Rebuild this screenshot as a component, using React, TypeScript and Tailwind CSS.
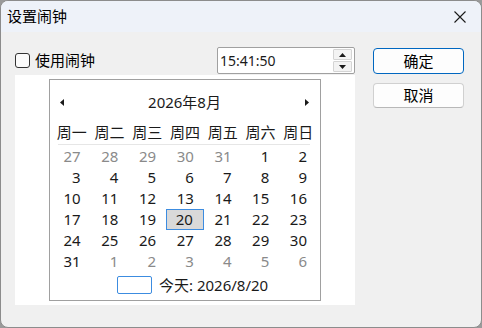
const font = { fontFamily: '"Noto Sans", "Noto Sans CJK SC", sans-serif' }

const weekdays = ['周一', '周二', '周三', '周四', '周五', '周六', '周日']

const days: { d: number; muted?: boolean }[] = [
  { d: 27, muted: true },
  { d: 28, muted: true },
  { d: 29, muted: true },
  { d: 30, muted: true },
  { d: 31, muted: true },
  ...Array.from({ length: 31 }, (_, i) => ({ d: i + 1 })),
  ...[1, 2, 3, 4, 5, 6].map((d) => ({ d, muted: true })),
]

function Calendar() {
  return (
    <div className="flex flex-col w-[272px] h-[222px] border border-[#a0a0a0] bg-white">
      <div className="flex items-center justify-between h-[24px] mt-[10px] pl-[10px] pr-[11px]">
        <svg width="4" height="7" viewBox="0 0 4 7">
          <path d="M4 0 L0 3.5 L4 7 Z" fill="#1a1a1a" />
        </svg>
        <span className="text-[15px] text-[#1a1a1a]">2026年8月</span>
        <svg width="4" height="7" viewBox="0 0 4 7">
          <path d="M0 0 L4 3.5 L0 7 Z" fill="#1a1a1a" />
        </svg>
      </div>
      <div className="px-[3px]">
        <div className="grid grid-cols-7 h-[20px] mt-[8px] items-center">
          {weekdays.map((w) => (
            <span key={w} className="text-center text-[15px] leading-none text-[#1a1a1a]">
              {w}
            </span>
          ))}
        </div>
        <div className="h-px bg-[#e6e6e6] ml-[5px] mr-[7px] mt-[2px]" />
        <div className="grid grid-cols-7 mt-[1px]">
          {days.map((c, i) => {
            const sel = !c.muted && c.d === 20
            return (
              <span
                key={i}
                className={
                  'h-[21px] flex items-center justify-end pr-[10px] text-[15px] leading-none ' +
                  (c.muted ? 'text-[#8a8a8a] ' : 'text-[#1a1a1a] ') +
                  (sel ? 'bg-[#d9d9d9] border border-[#3c8ce0] pr-[9px]' : '')
                }
              >
                {c.d}
              </span>
            )
          })}
        </div>
      </div>
      <div className="flex items-center gap-[7px] mt-[4px] ml-[67px] h-[18px]">
        <div className="w-[35px] h-[18px] border border-[#3c8ce0] rounded-[2px]" />
        <span className="text-[15px] leading-none text-[#1a1a1a]">今天: 2026/8/20</span>
      </div>
    </div>
  )
}

function Spin() {
  return (
    <div className="flex flex-col gap-px w-[19px]">
      <div className="h-[11px] flex items-center justify-center bg-[#f3f3f3] border border-[#d4d4d4] rounded-[1px]">
        <svg width="7" height="4" viewBox="0 0 7 4">
          <path d="M0 4 L3.5 0 L7 4 Z" fill="#1a1a1a" />
        </svg>
      </div>
      <div className="h-[11px] flex items-center justify-center bg-[#f3f3f3] border border-[#d4d4d4] rounded-[1px]">
        <svg width="7" height="4" viewBox="0 0 7 4">
          <path d="M0 0 L3.5 4 L7 0 Z" fill="#1a1a1a" />
        </svg>
      </div>
    </div>
  )
}

export default function App() {
  return (
    <div className="w-[482px] h-[328px] bg-[#9a9a9a]" style={font}>
      <div className="w-full h-full flex flex-col rounded-[8px] overflow-hidden border border-[#8c8c8c] bg-[#f0f0f0]">
        <div className="h-[31px] flex items-center justify-between bg-[#eef2f9] pl-[6px] pr-[15px]">
          <span className="text-[15px] text-black">设置闹钟</span>
          <svg width="12" height="12" viewBox="0 0 12 12">
            <path d="M0.5 0.5 L11.5 11.5 M11.5 0.5 L0.5 11.5" stroke="#1a1a1a" strokeWidth="1.1" />
          </svg>
        </div>
        <div className="flex pl-[14px] gap-[18px]">
          <div className="flex flex-col w-[340px]">
            <div className="flex items-center justify-between mt-[15px] h-[27px]">
              <label className="flex items-center gap-[5px]">
                <span className="w-[15px] h-[15px] rounded-[3px] border border-[#333] bg-[#fbfbfb]" />
                <span className="text-[15px] text-black">使用闹钟</span>
              </label>
              <div className="w-[138px] h-[27px] flex items-center justify-between border border-[#a0a0a0] rounded-[2px] bg-white pl-[2px] pr-[2px]">
                <span className="text-[14px] text-[#1a1a1a]">15:41:50</span>
                <Spin />
              </div>
            </div>
            <div className="mt-px h-[230px] bg-white flex justify-center pt-[4px]">
              <Calendar />
            </div>
          </div>
          <div className="flex flex-col gap-[9px] mt-[16px]">
            <button className="w-[91px] h-[26px] rounded-[4px] border border-[#0067c0] bg-[#fdfdfd] text-[15px] text-black">
              确定
            </button>
            <button className="w-[91px] h-[25px] rounded-[4px] border border-[#d0d0d0] border-b-[#b8b8b8] bg-[#fdfdfd] text-[15px] text-black">
              取消
            </button>
          </div>
        </div>
      </div>
    </div>
  )
}
